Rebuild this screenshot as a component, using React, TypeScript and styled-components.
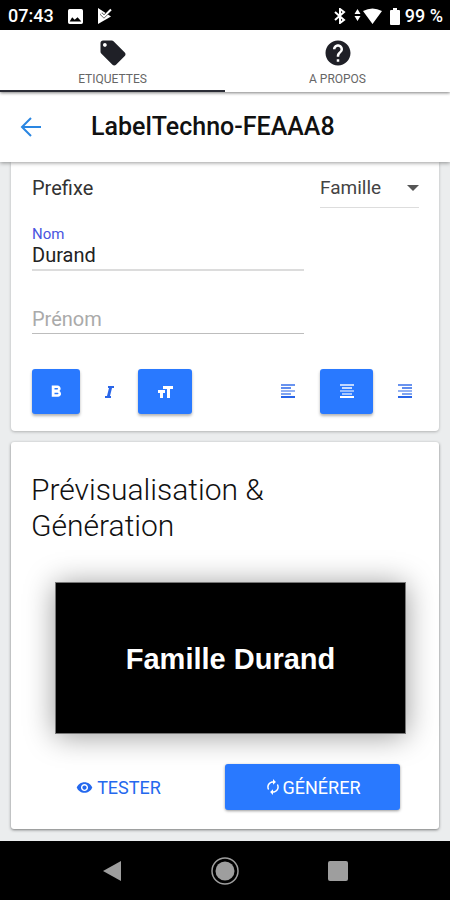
import React, { useState } from "react";
import styled, { createGlobalStyle } from "styled-components";

const GlobalStyle = createGlobalStyle`
  * { box-sizing: border-box; }
  body { margin: 0; background: #ebedee; font-family: Roboto, "Liberation Sans", sans-serif; color: #111; }
  button, input, select { font-family: inherit; margin: 0; }
`;

const Screen = styled.div`
  min-height: 100vh;
  display: flex;
  flex-direction: column;
`;

const StatusBar = styled.div`
  height: 30px;
  padding: 2px 7px 0 8px;
  background: #000;
  color: #fff;
  display: flex;
  justify-content: space-between;
  align-items: center;
  font-size: 18px;
  line-height: 28px;
  font-weight: 500;
`;

const StatusGroup = styled.div<{ $gap: number }>`
  display: flex;
  align-items: center;
  gap: ${(p) => p.$gap}px;
`;

const Icon = styled.svg<{ $w: number; $h?: number }>`
  display: block;
  flex: none;
  width: ${(p) => p.$w}px;
  height: ${(p) => p.$h ?? p.$w}px;
  fill: currentColor;
`;

const Tabs = styled.nav`
  display: flex;
  position: relative;
  z-index: 2;
  background: #fff;
  box-shadow: 0 1px 3px rgba(0, 0, 0, 0.5);
`;

const Tab = styled.button<{ $active: boolean }>`
  flex: 1;
  height: 62px;
  padding: 8px 0 0;
  display: flex;
  flex-direction: column;
  align-items: center;
  gap: 2px;
  border: 0;
  border-bottom: 2px solid ${(p) => (p.$active ? "#2b2d36" : "#fff")};
  background: none;
  color: #1f2027;
`;

const TabLabel = styled.span`
  font-size: 12px;
  line-height: 18px;
  color: #666;
`;

const Toolbar = styled.header`
  position: relative;
  z-index: 1;
  height: 70px;
  padding: 0 20px;
  display: flex;
  align-items: center;
  gap: 49px;
  background: #fff;
  box-shadow: 0 1px 4px rgba(0, 0, 0, 0.4);
`;

const BackButton = styled.button`
  padding: 0;
  border: 0;
  background: none;
  color: #2a86e2;
`;

const Title = styled.h1`
  margin: 0;
  font-size: 25px;
  line-height: 32px;
  font-weight: 500;
`;

const Content = styled.main`
  flex: 1;
  padding: 0 11px 11px;
  display: flex;
  flex-direction: column;
  gap: 11px;
`;

const Card = styled.section<{ $first?: boolean }>`
  padding: ${(p) => (p.$first ? "6px 20px 17px 21px" : "30px 20px 19px")};
  border-radius: ${(p) => (p.$first ? "0 0 4px 4px" : "3px")};
  background: #fff;
  box-shadow: 0 1px 3px rgba(0, 0, 0, ${(p) => (p.$first ? 0.25 : 0.5)});
`;

const PrefixRow = styled.div`
  display: flex;
  justify-content: space-between;
  align-items: center;
  height: 40px;
`;

const PrefixLabel = styled.label`
  font-size: 20px;
  line-height: 24px;
  color: #333;
`;

const SelectWrap = styled.div`
  width: 99px;
  display: flex;
  align-items: center;
  border-bottom: 1px solid #ddd;
  color: #555;
`;

const Select = styled.select`
  flex: 1;
  min-width: 0;
  height: 38px;
  padding: 0;
  border: 0;
  outline: 0;
  appearance: none;
  background: none;
  font-size: 19px;
  color: #444;
`;

const Field = styled.div<{ $active: boolean }>`
  width: calc(100% - 115px);
  padding-top: ${(p) => (p.$active ? 18 : 36)}px;
  display: flex;
  flex-direction: column;
  border-bottom: ${(p) => (p.$active ? "2px solid #dcdcdc" : "1px solid #bdbdbd")};
`;

const FieldLabel = styled.label`
  font-size: 15px;
  line-height: 17px;
  color: #4a55e0;
`;

const Input = styled.input`
  width: 100%;
  height: 26px;
  padding: 0 0 2px;
  border: 0;
  outline: 0;
  background: none;
  font-size: 20px;
  color: #222;
  &::placeholder { color: #aaa; opacity: 1; }
`;

const FormatRow = styled.div`
  margin-top: 35px;
  display: flex;
  justify-content: space-between;
`;

const ButtonGroup = styled.div`
  display: flex;
  gap: 5px;
`;

const FormatButton = styled.button<{ $on: boolean; $w: number }>`
  width: ${(p) => p.$w}px;
  height: 45px;
  padding: 0;
  display: flex;
  align-items: center;
  justify-content: center;
  border: 0;
  border-radius: 3px;
  background: ${(p) => (p.$on ? "#2979ff" : "transparent")};
  color: ${(p) => (p.$on ? "#fff" : "#2965e8")};
  box-shadow: ${(p) => (p.$on ? "0 2px 3px rgba(0, 0, 0, 0.3)" : "none")};
`;

const AlignGroup = styled(ButtonGroup)`
  margin-right: -13px;
`;

const Heading = styled.h2`
  margin: 0;
  padding-right: 40px;
  font-size: 30px;
  line-height: 36px;
  font-weight: 300;
`;

const Preview = styled.div`
  height: 152px;
  margin: 38px 13px 0 24px;
  padding-top: 2px;
  display: flex;
  align-items: center;
  justify-content: center;
  border: 1px solid #777;
  background: #000;
  box-shadow: 0 2px 28px rgba(0, 0, 0, 0.4);
  color: #fff;
  font-family: "Liberation Sans", Arial, sans-serif;
  font-size: 29px;
  line-height: 36px;
  font-weight: 700;
`;

const Actions = styled.div`
  margin-top: 30px;
  display: grid;
  grid-template-columns: 1fr 1fr;
  gap: 19px;
  padding-right: 19px;
`;

const ActionButton = styled.button<{ $primary?: boolean }>`
  height: 46px;
  padding: 0;
  display: flex;
  align-items: center;
  justify-content: center;
  gap: ${(p) => (p.$primary ? 2 : 4)}px;
  border: 0;
  border-radius: 3px;
  font-size: 18px;
  background: ${(p) => (p.$primary ? "#2979ff" : "transparent")};
  color: ${(p) => (p.$primary ? "#fff" : "#2468ee")};
  box-shadow: ${(p) => (p.$primary ? "0 1px 3px rgba(0, 0, 0, 0.4)" : "none")};
`;

const NavBar = styled.footer`
  height: 59px;
  display: grid;
  grid-template-columns: repeat(3, 1fr);
  padding: 0 56px;
  background: #000;
`;

const NavButton = styled.button`
  padding: 0;
  display: flex;
  align-items: center;
  justify-content: center;
  border: 0;
  background: none;
  color: #9e9e9e;
`;

function AlignIcon({ kind }: { kind: "left" | "center" | "right" }) {
  const short = { left: 0, center: 2, right: 4 }[kind];
  return (
    <Icon $w={14} $h={15} viewBox="0 0 14 15">
      <rect x="0" y="0" width="14" height="2" opacity=".7" />
      <rect x={short} y="3" width="10" height="2" opacity=".75" />
      <rect x="0" y="6" width="14" height="2" opacity=".5" />
      <rect x={short} y="9" width="10" height="2" opacity=".6" />
      <rect x="0" y="12" width="14" height="2" />
    </Icon>
  );
}

export default function App() {
  const [prefix, setPrefix] = useState("Famille");
  const [name, setName] = useState("Durand");
  const [first, setFirst] = useState("");
  return (
    <>
      <GlobalStyle />
      <Screen>
        <StatusBar>
          <StatusGroup $gap={14}>
            <span>07:43</span>
            <Icon $w={15} viewBox="0 0 18 18">
              <path fillRule="evenodd" d="M2 0h14a2 2 0 0 1 2 2v14a2 2 0 0 1-2 2H2a2 2 0 0 1-2-2V2a2 2 0 0 1 2-2zM5 10l-3 5h14l-4.500-5-3.500 3z" />
            </Icon>
            <Icon $w={15} $h={16} viewBox="0 0 15 16">
              <path d="M1 0L14 8.500 1 16z" />
              <path d="M4 5.500l3 3L14 1.500" fill="none" stroke="#000" strokeWidth="3" />
              <path d="M4 5.500l3 3L14 1.500" fill="none" stroke="currentColor" strokeWidth="2" />
            </Icon>
          </StatusGroup>
          <StatusGroup $gap={8}>
            <Icon $w={12} $h={16} viewBox="0 0 12 16">
              <path d="M1 4l9 8-4 3V1l4 3-9 8" fill="none" stroke="currentColor" strokeWidth="2" />
            </Icon>
            <Icon $w={28} $h={16} viewBox="0 0 28 16">
              <path d="M3.500 1L6.500 6h-6zM.5 8h6l-3 5zM9 3q9.500-5 19 0L18.500 16z" />
            </Icon>
            <StatusGroup $gap={5}>
              <Icon $w={10} $h={17} viewBox="0 0 10 17">
                <path d="M3 0h4v2h2q1 0 1 1v13q0 1-1 1H1q-1 0-1-1V3q0-1 1-1h2z" />
              </Icon>
              <span>99 %</span>
            </StatusGroup>
          </StatusGroup>
        </StatusBar>

        <Tabs>
          <Tab type="button" $active>
            <Icon $w={30} viewBox="0 0 24 24">
              <path d="M21.410 11.580l-9-9C12.050 2.220 11.550 2 11 2H4c-1.100 0-2 .9-2 2v7c0 .55.220 1.050.590 1.420l9 9c.36.36.860.580 1.410.580s1.050-.22 1.410-.590l7-7c.37-.36.590-.860.590-1.410s-.23-1.060-.590-1.420zM5.500 7C4.670 7 4 6.330 4 5.500S4.670 4 5.500 4 7 4.670 7 5.500 6.330 7 5.500 7z" />
            </Icon>
            <TabLabel>ETIQUETTES</TabLabel>
          </Tab>
          <Tab type="button" $active={false}>
            <Icon $w={30} viewBox="0 0 24 24">
              <path d="M12 2C6.480 2 2 6.480 2 12s4.480 10 10 10 10-4.480 10-10S17.520 2 12 2zm1 17h-2v-2h2v2zm2.070-7.750l-.9.920C13.450 12.900 13 13.500 13 15h-2v-.5c0-1.100.450-2.100 1.170-2.830l1.240-1.260c.37-.36.590-.860.590-1.410 0-1.100-.9-2-2-2s-2 .9-2 2H8c0-2.210 1.790-4 4-4s4 1.790 4 4c0 .880-.36 1.680-.930 2.250z" />
            </Icon>
            <TabLabel>A PROPOS</TabLabel>
          </Tab>
        </Tabs>

        <Toolbar>
          <BackButton type="button" aria-label="Retour">
            <Icon $w={22} $h={20} viewBox="0 0 22 20">
              <path d="M11 1L2 10l9 9M2 10h19" fill="none" stroke="currentColor" strokeWidth="2" />
            </Icon>
          </BackButton>
          <Title>LabelTechno-FEAAA8</Title>
        </Toolbar>

        <Content>
          <Card $first>
            <PrefixRow>
              <PrefixLabel htmlFor="prefix">Prefixe</PrefixLabel>
              <SelectWrap>
                <Select id="prefix" value={prefix} onChange={(e) => setPrefix(e.target.value)}>
                  <option>Famille</option>
                </Select>
                <Icon $w={12} $h={6} viewBox="0 0 12 6">
                  <path d="M0 0h12L6 6z" />
                </Icon>
              </SelectWrap>
            </PrefixRow>
            <Field $active>
              <FieldLabel htmlFor="nom">Nom</FieldLabel>
              <Input id="nom" value={name} onChange={(e) => setName(e.target.value)} />
            </Field>
            <Field $active={false}>
              <Input aria-label="Prénom" placeholder="Prénom" value={first} onChange={(e) => setFirst(e.target.value)} />
            </Field>
            <FormatRow>
              <ButtonGroup>
                <FormatButton type="button" $on $w={48} aria-label="Gras">
                  <Icon $w={19} viewBox="0 0 24 24">
                    <path d="M15.600 11.290c.97-.67 1.650-1.770 1.650-2.790 0-2.260-1.750-4-4-4H6v14h8.040c2.090 0 3.710-1.700 3.710-3.290 0-1.520-.860-3.320-2.150-3.920zM9.500 7.500h3.500c.6 0 1 .5 1 1s-.4 1-1 1H9.500zm4 8h-4v-2h4c.6 0 1 .5 1 1s-.4 1-1 1z" />
                  </Icon>
                </FormatButton>
                <FormatButton type="button" $on={false} $w={48} aria-label="Italique">
                  <Icon $w={9} $h={12} viewBox="0 0 9 12">
                    <path d="M3 0h6v2H7L5 10h1v2H0v-2h2L4 2H3z" />
                  </Icon>
                </FormatButton>
                <FormatButton type="button" $on $w={54} aria-label="Taille du texte">
                  <Icon $w={15} $h={12} viewBox="0 0 15 12">
                    <path d="M5 0h10v3h-3v9H9V3H5zM0 4h7v3H5v5H2V7H0z" />
                  </Icon>
                </FormatButton>
              </ButtonGroup>
              <AlignGroup>
                <FormatButton type="button" $on={false} $w={54} aria-label="Aligner à gauche">
                  <AlignIcon kind="left" />
                </FormatButton>
                <FormatButton type="button" $on $w={53} aria-label="Centrer">
                  <AlignIcon kind="center" />
                </FormatButton>
                <FormatButton type="button" $on={false} $w={54} aria-label="Aligner à droite">
                  <AlignIcon kind="right" />
                </FormatButton>
              </AlignGroup>
            </FormatRow>
          </Card>

          <Card>
            <Heading>Prévisualisation &amp; Génération</Heading>
            <Preview>{`${prefix} ${name}`}</Preview>
            <Actions>
              <ActionButton type="button">
                <Icon $w={17} viewBox="0 0 24 24">
                  <path d="M12 4.500C7 4.500 2.730 7.610 1 12c1.730 4.390 6 7.500 11 7.500s9.270-3.110 11-7.500c-1.730-4.390-6-7.500-11-7.500zM12 17c-2.760 0-5-2.240-5-5s2.240-5 5-5 5 2.240 5 5-2.240 5-5 5zm0-8c-1.660 0-3 1.340-3 3s1.340 3 3 3 3-1.340 3-3-1.340-3-3-3z" />
                </Icon>
                TESTER
              </ActionButton>
              <ActionButton type="button" $primary>
                <Icon $w={16} viewBox="2 1 20 22">
                  <path d="M12 6v3l4-4-4-4v3c-4.420 0-8 3.580-8 8 0 1.570.460 3.030 1.240 4.260L6.700 14.800c-.450-.83-.7-1.790-.7-2.800 0-3.310 2.690-6 6-6zm6.760 1.740L17.300 9.200c.440.840.7 1.790.7 2.800 0 3.310-2.690 6-6 6v-3l-4 4 4 4v-3c4.420 0 8-3.580 8-8 0-1.570-.460-3.030-1.240-4.260z" />
                </Icon>
                GÉNÉRER
              </ActionButton>
            </Actions>
          </Card>
        </Content>

        <NavBar>
          <NavButton type="button" aria-label="Précédent">
            <Icon $w={18} $h={20} viewBox="0 0 18 20">
              <path d="M18 0v20L0 10z" />
            </Icon>
          </NavButton>
          <NavButton type="button" aria-label="Accueil">
            <Icon $w={28} viewBox="0 0 28 28">
              <circle cx="14" cy="14" r="13" fill="none" stroke="currentColor" strokeWidth="1.500" />
              <circle cx="14" cy="14" r="9.500" />
            </Icon>
          </NavButton>
          <NavButton type="button" aria-label="Applications récentes">
            <Icon $w={20} viewBox="0 0 20 20">
              <rect width="20" height="20" rx="2" />
            </Icon>
          </NavButton>
        </NavBar>
      </Screen>
    </>
  );
}
